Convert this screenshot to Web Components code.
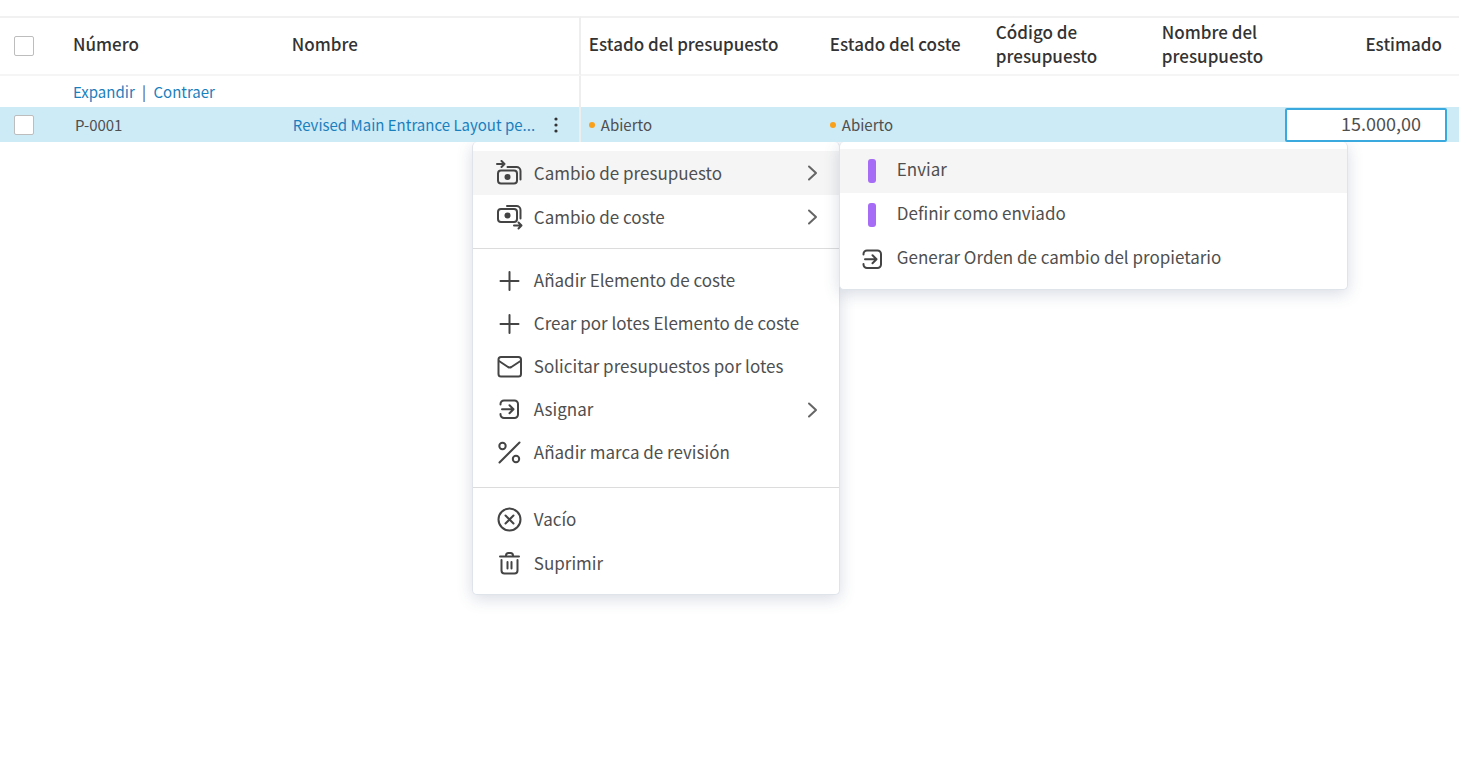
<!DOCTYPE html>
<html lang="es">
<head>
<meta charset="utf-8">
<title>Presupuesto</title>
<style>
body {
    margin: 0;
    padding-top: 16px;
    min-height: 100vh;
    box-sizing: border-box;
    background: #fff;
    color: #4f4f4f;
    font-family: "Noto Sans CJK SC", "Noto Sans", sans-serif;
    font-size: 15px;
}
</style>
</head>
<body>
<cost-grid>
    <action-menu slot="menu" class="main">
        <menu-section>
            <menu-item icon="budget" arrow active>Cambio de presupuesto
                <action-menu slot="submenu" class="sub">
                    <menu-section>
                        <menu-item icon="bar" active>Enviar</menu-item>
                        <menu-item icon="bar">Definir como enviado</menu-item>
                        <menu-item icon="assign">Generar Orden de cambio del propietario</menu-item>
                    </menu-section>
                </action-menu>
            </menu-item>
            <menu-item icon="cost" arrow>Cambio de coste</menu-item>
        </menu-section>
        <menu-section class="dense">
            <menu-item icon="plus">Añadir Elemento de coste</menu-item>
            <menu-item icon="plus">Crear por lotes Elemento de coste</menu-item>
            <menu-item icon="mail">Solicitar presupuestos por lotes</menu-item>
            <menu-item icon="assign" arrow>Asignar</menu-item>
            <menu-item icon="percent">Añadir marca de revisión</menu-item>
        </menu-section>
        <menu-section>
            <menu-item icon="void">Vacío</menu-item>
            <menu-item icon="trash">Suprimir</menu-item>
        </menu-section>
    </action-menu>
</cost-grid>

<script>
const icons = {
    budget: `<path d="M1 4h7.500M5.500 1l3 3-3 3"/><rect x="2" y="10.500" width="19" height="13" rx="3"/><path d="M11.500 7h9a4 4 0 0 1 4 4v8.500"/><circle cx="11.500" cy="17" r="3" fill="currentColor" stroke="none"/>`,
    cost: `<rect x="2" y="5" width="19" height="13" rx="3"/><path d="M11 2h9.500a4 4 0 0 1 4 4v8.500"/><circle cx="11.500" cy="11.500" r="3" fill="currentColor" stroke="none"/><path d="M18 21.500h7.500M22.500 18.500l3 3-3 3"/>`,
    plus: `<path d="M13.500 5v18M4.500 14h18"/>`,
    mail: `<rect x="2.500" y="4" width="22.500" height="19.500" rx="2.500"/><path d="M3 8l9 6q1.700.8 3.400 0L24.500 8"/>`,
    assign: `<path d="M4.500 8.500V8A3.500 3.500 0 0 1 8 4.500h10.500A3.500 3.500 0 0 1 22 8v10.500a3.500 3.500 0 0 1-3.500 3.500H8a3.500 3.500 0 0 1-3.500-3.500V18M6 13.200h11M13.500 9.200l4 4-4 4"/>`,
    percent: `<path d="M23.500 3.500l-20 20"/><circle cx="6.500" cy="7" r="3.200"/><circle cx="20" cy="20" r="3.200"/>`,
    void: `<circle cx="13.500" cy="13.500" r="11"/><path d="M9.500 9.500l8 8M17.500 9.500l-8 8"/>`,
    trash: `<path d="M4 6.500h19M10 6V5.500a2.500 2.500 0 0 1 2.500-2.500h2A2.500 2.500 0 0 1 17 5.500V6M5.500 10v10.500a3 3 0 0 0 3 3h10a3 3 0 0 0 3-3V10M11.500 12v6.500M15.500 12v6.500"/>`,
    bar: `<rect x="9" y="1" width="8" height="24" rx="3" fill="#a66cf5" stroke="none"/>`,
}

class CostGrid extends HTMLElement{
    constructor(){
        super()
        this._shadowDom = this.attachShadow({mode:'open'})
    }
    connectedCallback(){
        this._shadowDom.innerHTML=`
        <style>
            :host{
                display: block;
            }
            table{
                width: 100%;
                table-layout: fixed;
                border-collapse: separate;
                border-spacing: 0;
            }
            .c-check{ width: 65px; }
            .c-number{ width: 15%; }
            .c-name{ width: 297px; }
            .c-state{ width: 241px; }
            .c-text{ width: 166px; }
            .c-money{ width: 182px; }
            th{
                box-sizing: border-box;
                height: 60px;
                padding: 0 8px 4px;
                border-top: 2px solid #f1f1f1;
                border-bottom: 2px solid #f5f5f5;
                font-size: 17px;
                line-height: 24px;
                font-weight: 500;
                text-align: left;
                color: #333;
            }
            td{
                box-sizing: border-box;
                height: 31px;
                padding: 0 8px;
                line-height: 24px;
                white-space: nowrap;
            }
            .split{
                border-right: 2px solid #eee;
            }
            .check{
                padding: 0 0 0 14px;
            }
            .money{
                padding-right: 17px;
                text-align: right;
            }
            input[type=checkbox]{
                display: block;
                appearance: none;
                box-sizing: border-box;
                width: 20px;
                height: 20px;
                margin: 0;
                border: 1px solid #bdbdbd;
                border-radius: 2px;
                background: #fff;
            }
            a{
                color: #1a80bd;
                text-decoration: none;
            }
            .bar{
                margin: 0 4px;
            }
            .selected td{
                height: 35px;
                background: #cdeaf7;
            }
            .selected .number{
                padding-left: 10px;
            }
            .selected .split{
                padding: 0 6px 0 9px;
            }
            .name{
                position: relative;
                display: flex;
                align-items: center;
                height: 35px;
            }
            .name a{
                flex: 1;
            }
            button{
                width: 34px;
                height: 28px;
                padding: 0;
                border: 0;
                background: none;
                color: #333;
            }
            button svg{
                display: block;
                margin: auto;
            }
            .selected .edit{
                padding: 0 12px 0 8px;
            }
            .edit input{
                display: block;
                box-sizing: border-box;
                width: 100%;
                height: 34px;
                padding: 0 24px 3px 8px;
                border: 2px solid #3aaade;
                border-radius: 2px;
                background: #fff;
                color: #4f4f4f;
                font: inherit;
                font-size: 18px;
                text-align: right;
                outline: 0;
            }
        </style>
        <table>
            <colgroup>
                <col class="c-check"><col class="c-number"><col class="c-name"><col class="c-state">
                <col class="c-text"><col class="c-text"><col><col class="c-money">
            </colgroup>
            <thead>
                <tr>
                    <th class="check"><input type="checkbox" aria-label="Seleccionar todo"></th>
                    <th>Número</th>
                    <th class="split">Nombre</th>
                    <th>Estado del presupuesto</th>
                    <th>Estado del coste</th>
                    <th>Código de presupuesto</th>
                    <th>Nombre del presupuesto</th>
                    <th class="money">Estimado</th>
                </tr>
            </thead>
            <tbody>
                <tr>
                    <td></td>
                    <td><a href="#expandir">Expandir</a><span class="bar"> | </span><a href="#contraer">Contraer</a></td>
                    <td class="split"></td>
                    <td colspan="5"></td>
                </tr>
                <tr class="selected">
                    <td class="check"><input type="checkbox" aria-label="Seleccionar P-0001"></td>
                    <td class="number">P-0001</td>
                    <td class="split">
                        <div class="name">
                            <a href="#p-0001">Revised Main Entrance Layout pe...</a>
                            <button type="button" aria-label="Acciones">
                                <svg width="4" height="16" viewBox="0 0 4 16" fill="currentColor"><circle cx="2" cy="2" r="1.600"/><circle cx="2" cy="8" r="1.600"/><circle cx="2" cy="14" r="1.600"/></svg>
                            </button>
                            <slot name="menu"></slot>
                        </div>
                    </td>
                    <td><state-label>Abierto</state-label></td>
                    <td><state-label>Abierto</state-label></td>
                    <td></td>
                    <td></td>
                    <td class="edit"><input type="text" value="15.000,00" aria-label="Estimado"></td>
                </tr>
            </tbody>
        </table>
        `
    }
}

class StateLabel extends HTMLElement{
    constructor(){
        super()
        this._shadowDom = this.attachShadow({mode:'open'})
    }
    connectedCallback(){
        this._shadowDom.innerHTML=`
        <style>
            :host{
                display: flex;
                align-items: center;
                gap: 6px;
            }
            i{
                width: 6px;
                height: 6px;
                border-radius: 50%;
                background: #f9a11b;
            }
        </style>
        <i></i><span><slot></slot></span>
        `
    }
}

class ActionMenu extends HTMLElement{
    constructor(){
        super()
        this._shadowDom = this.attachShadow({mode:'open'})
    }
    connectedCallback(){
        this._shadowDom.innerHTML=`
        <style>
            :host{
                position: absolute;
                z-index: 1;
                box-sizing: border-box;
                border: 1px solid #dfe3ea;
                border-top: 0;
                border-radius: 5px;
                background: #fff;
                box-shadow: 0 4px 16px rgba(60, 80, 120, .2);
                /* keeps the shadow off the row above, open on the other sides */
                clip-path: inset(0 -100vw -100vh -30px);
            }
            /* hangs under the row's action button */
            :host(.main){
                top: 100%;
                left: 179px;
                width: 368px;
            }
            /* opens to the right of its item */
            :host(.sub){
                top: -9px;
                left: 100%;
                width: 509px;
                --icon-left: 19px;
                --label-lift: 4px;
                --section-top: 7px;
                --section-bottom: 8px;
            }
        </style>
        <slot></slot>
        `
    }
}

class MenuSection extends HTMLElement{
    constructor(){
        super()
        this._shadowDom = this.attachShadow({mode:'open'})
    }
    connectedCallback(){
        this._shadowDom.innerHTML=`
        <style>
            :host{
                display: block;
                padding: var(--section-top, 9px) 0 var(--section-bottom, 9px);
            }
            :host(:not(:first-child)){
                border-top: 1px solid #dcdcdc;
            }
            :host(.dense){
                padding: 10px 0 13px;
                --item-height: 43px;
            }
        </style>
        <slot></slot>
        `
    }
}

class MenuItem extends HTMLElement{
    constructor(){
        super()
        this._shadowDom = this.attachShadow({mode:'open'})
    }
    connectedCallback(){
        const arrow = this.hasAttribute('arrow')
            ? '<svg class="arrow" width="12" height="18" viewBox="0 0 12 18"><path d="M2 2.500L9 9l-7 6.500"/></svg>' : ''
        this._shadowDom.innerHTML=`
        <style>
            :host{
                display: block;
                position: relative;
            }
            button{
                display: flex;
                align-items: center;
                gap: 11px;
                width: 100%;
                height: var(--item-height, 44px);
                padding: 0 20px 0 var(--icon-left, 23px);
                border: 0;
                background: none;
                color: #4f4f4f;
                font: inherit;
                font-size: 17px;
                line-height: 24px;
                text-align: left;
            }
            :host([active]) button{
                background: #f5f5f5;
            }
            svg{
                flex: none;
                fill: none;
                stroke: #444;
                color: #444;
                stroke-width: 2;
                stroke-linecap: round;
                stroke-linejoin: round;
            }
            .arrow{
                stroke: #666;
            }
            span{
                flex: 1;
                padding-bottom: var(--label-lift, 1px);
                white-space: nowrap;
            }
        </style>
        <button type="button">
            <svg width="27" height="27" viewBox="0 0 27 27">${icons[this.getAttribute('icon')]}</svg>
            <span><slot></slot></span>
            ${arrow}
        </button>
        <slot name="submenu"></slot>
        `
    }
}

window.customElements.define('cost-grid',CostGrid)
window.customElements.define('state-label',StateLabel)
window.customElements.define('action-menu',ActionMenu)
window.customElements.define('menu-section',MenuSection)
window.customElements.define('menu-item',MenuItem)
</script>
</body>
</html>
